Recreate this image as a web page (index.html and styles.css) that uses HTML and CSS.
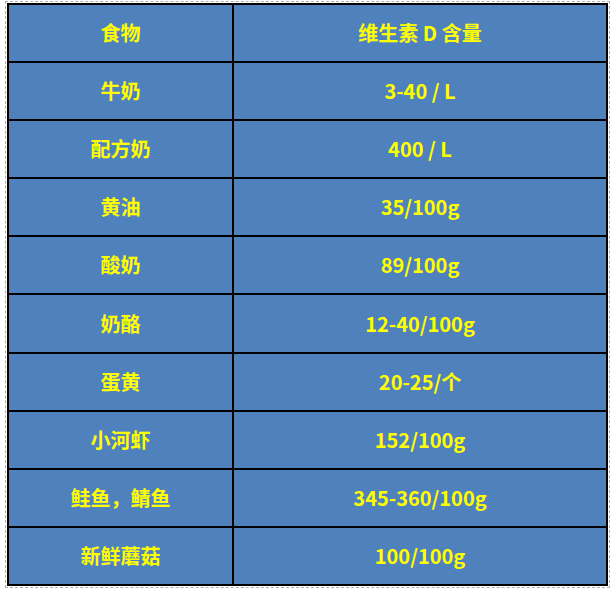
FILE: index.html
```html
<!DOCTYPE html>
<html lang="zh">
<head>
<meta charset="utf-8">
<link rel="stylesheet" href="styles.css">
</head>
<body>
<div class="frame">
<table class="vd">
<colgroup><col class="c1"><col class="c2"></colgroup>
<tr><td>食物</td><td>维生素 D 含量</td></tr>
<tr><td>牛奶</td><td>3-40 / L</td></tr>
<tr><td>配方奶</td><td>400 / L</td></tr>
<tr><td>黄油</td><td>35/100g</td></tr>
<tr><td>酸奶</td><td>89/100g</td></tr>
<tr><td>奶酪</td><td>12-40/100g</td></tr>
<tr><td>蛋黄</td><td>20-25/个</td></tr>
<tr><td>小河虾</td><td>152/100g</td></tr>
<tr><td>鲑鱼，鲭鱼</td><td>345-360/100g</td></tr>
<tr><td>新鲜蘑菇</td><td>100/100g</td></tr>
</table>
</div>
</body>
</html>
```
FILE: styles.css
```css
html, body {
  margin: 0;
  padding: 0;
  background: #ffffff;
}
body {
  padding: 1px 0 0 5px;
}
.frame {
  display: inline-block;
  border: 1px dashed #b0b0b0;
  padding: 1px;
  line-height: 0;
}
.vd {
  border-collapse: collapse;
  width: 601px;
  height: 583px;
  border: 2px solid #000;
  background: #4f81bd;
  font-family: "Noto Sans CJK SC", "Liberation Sans", sans-serif;
  font-weight: bold;
  font-size: 20px;
  color: #ffff00;
  line-height: 1.2;
}
.c1 { width: 225px; }
.vd td {
  border: 2px solid #000;
  text-align: center;
  vertical-align: middle;
  padding: 0;
  height: 56px;
}
```
